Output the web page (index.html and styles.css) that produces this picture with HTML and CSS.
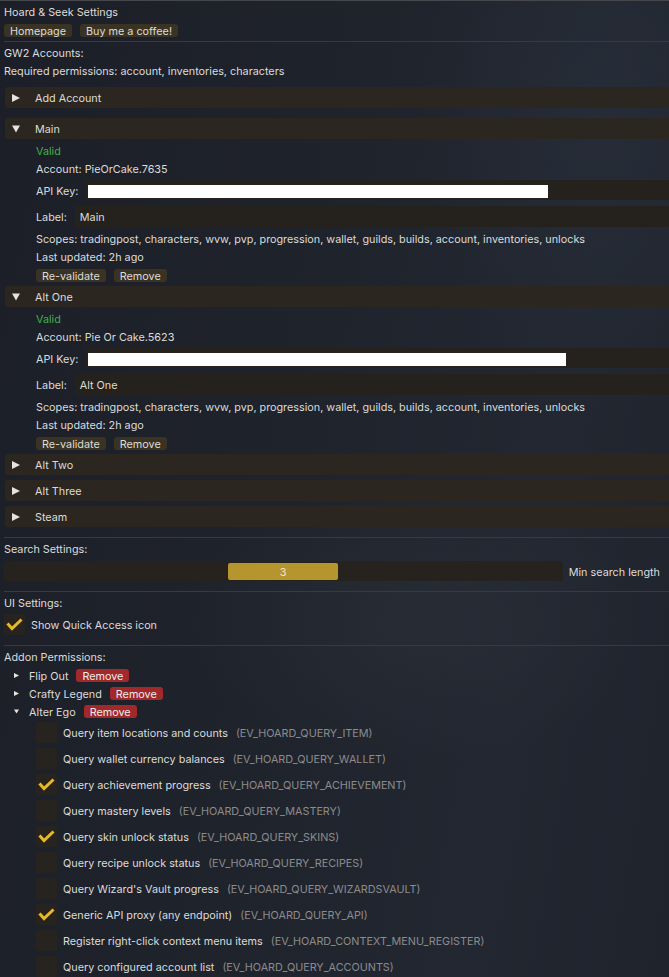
FILE: index.html
```html
<!DOCTYPE html>
<html>
<head>
<meta charset="utf-8">
<title>Hoard &amp; Seek Settings</title>
<link rel="stylesheet" href="styles.css">
</head>
<body>
<div class="win">
  <div class="line">Hoard &amp; Seek Settings</div>
  <div class="btnrow"><span class="btn">Homepage</span><span class="btn">Buy me a coffee!</span></div>
  <div class="sep sep-top"></div>
  <div class="line">GW2 Accounts:</div>
  <div class="line">Required permissions: account, inventories, characters</div>

  <div class="hdr hdr-add"><svg class="tri" viewBox="0 0 8 8"><polygon points="0,0 8,4 0,8"/></svg><span>Add Account</span></div>

  <div class="hdr hdr-main"><svg class="tri" viewBox="0 0 8 8"><polygon points="0,0.5 8,0.5 4,7.5"/></svg><span>Main</span></div>
  <div class="acct">
    <div class="line valid">Valid</div>
    <div class="line">Account: PieOrCake.7635</div>
    <div class="field field-key"><span>API Key:</span><span class="input"><span class="redact" style="width:460px"></span></span></div>
    <div class="field field-label"><span>Label:</span><span class="input">Main</span></div>
    <div class="line scopes">Scopes: tradingpost, characters, wvw, pvp, progression, wallet, guilds, builds, account, inventories, unlocks</div>
    <div class="line">Last updated: 2h ago</div>
    <div class="btnrow"><span class="btn">Re-validate</span><span class="btn">Remove</span></div>
  </div>

  <div class="hdr hdr-alt1"><svg class="tri" viewBox="0 0 8 8"><polygon points="0,0.5 8,0.5 4,7.5"/></svg><span>Alt One</span></div>
  <div class="acct">
    <div class="line valid">Valid</div>
    <div class="line">Account: Pie Or Cake.5623</div>
    <div class="field field-key"><span>API Key:</span><span class="input"><span class="redact" style="width:478px"></span></span></div>
    <div class="field field-label"><span>Label:</span><span class="input">Alt One</span></div>
    <div class="line scopes">Scopes: tradingpost, characters, wvw, pvp, progression, wallet, guilds, builds, account, inventories, unlocks</div>
    <div class="line">Last updated: 2h ago</div>
    <div class="btnrow"><span class="btn">Re-validate</span><span class="btn">Remove</span></div>
  </div>

  <div class="hdr hdr-alt2"><svg class="tri" viewBox="0 0 8 8"><polygon points="0,0 8,4 0,8"/></svg><span>Alt Two</span></div>
  <div class="hdr hdr-next"><svg class="tri" viewBox="0 0 8 8"><polygon points="0,0 8,4 0,8"/></svg><span>Alt Three</span></div>
  <div class="hdr hdr-next"><svg class="tri" viewBox="0 0 8 8"><polygon points="0,0 8,4 0,8"/></svg><span>Steam</span></div>

  <div class="sep"></div>
  <div class="line">Search Settings:</div>
  <div class="slider-row">
    <div class="slider"><span class="grab" style="margin-left:224px">3</span></div>
    <span class="slider-label">Min search length</span>
  </div>

  <div class="sep"></div>
  <div class="line">UI Settings:</div>
  <div class="check-row ui-check">
    <span class="box"><svg viewBox="0 0 21 21"><polyline points="3.5,9.5 8,14.5 17.5,5.5"/></svg></span>
    <span>Show Quick Access icon</span>
  </div>

  <div class="sep"></div>
  <div class="line">Addon Permissions:</div>
  <div class="addon"><svg class="stri" viewBox="0 0 5 5"><polygon points="0,0 5,2.5 0,5"/></svg><span>Flip Out</span><span class="btn red">Remove</span></div>
  <div class="addon"><svg class="stri" viewBox="0 0 5 5"><polygon points="0,0 5,2.5 0,5"/></svg><span>Crafty Legend</span><span class="btn red">Remove</span></div>
  <div class="addon"><svg class="stri" viewBox="0 0 5 5"><polygon points="0,0.5 5,0.5 2.5,4.5"/></svg><span>Alter Ego</span><span class="btn red">Remove</span></div>

  <div class="perms">
    <div class="check-row perm"><span class="box"></span><span>Query item locations and counts</span><span class="code">(EV_HOARD_QUERY_ITEM)</span></div>
    <div class="check-row perm"><span class="box"></span><span>Query wallet currency balances</span><span class="code">(EV_HOARD_QUERY_WALLET)</span></div>
    <div class="check-row perm"><span class="box"><svg viewBox="0 0 21 21"><polyline points="3.5,9.5 8,14.5 17.5,5.5"/></svg></span><span>Query achievement progress</span><span class="code">(EV_HOARD_QUERY_ACHIEVEMENT)</span></div>
    <div class="check-row perm"><span class="box"></span><span>Query mastery levels</span><span class="code">(EV_HOARD_QUERY_MASTERY)</span></div>
    <div class="check-row perm"><span class="box"><svg viewBox="0 0 21 21"><polyline points="3.5,9.5 8,14.5 17.5,5.5"/></svg></span><span>Query skin unlock status</span><span class="code">(EV_HOARD_QUERY_SKINS)</span></div>
    <div class="check-row perm"><span class="box"></span><span>Query recipe unlock status</span><span class="code">(EV_HOARD_QUERY_RECIPES)</span></div>
    <div class="check-row perm"><span class="box"></span><span>Query Wizard's Vault progress</span><span class="code">(EV_HOARD_QUERY_WIZARDSVAULT)</span></div>
    <div class="check-row perm"><span class="box"><svg viewBox="0 0 21 21"><polyline points="3.5,9.5 8,14.5 17.5,5.5"/></svg></span><span>Generic API proxy (any endpoint)</span><span class="code">(EV_HOARD_QUERY_API)</span></div>
    <div class="check-row perm"><span class="box"></span><span>Register right-click context menu items</span><span class="code">(EV_HOARD_CONTEXT_MENU_REGISTER)</span></div>
    <div class="check-row perm"><span class="box"></span><span>Query configured account list</span><span class="code">(EV_HOARD_QUERY_ACCOUNTS)</span></div>
  </div>
</div>
</body>
</html>
```
FILE: styles.css
```css
html, body {
  margin: 0;
  padding: 0;
}
body {
  width: 669px;
  height: 977px;
  overflow: hidden;
  font-family: Inter, "Noto Sans", sans-serif;
  font-size: 10.8px;
  color: #dcdcda;
  background:
    radial-gradient(ellipse 260px 420px at 600px 120px, rgba(44, 52, 64, 0.45), rgba(44, 52, 64, 0) 70%),
    radial-gradient(ellipse 340px 200px at 420px 620px, rgba(46, 52, 60, 0.45), rgba(46, 52, 60, 0) 70%),
    linear-gradient(100deg, #1c1f28 0%, #1f232c 45%, #222731 75%, #1f232c 100%);
}
.win {
  border-top: 1px solid #45474c;
  padding: 2px 0 0 4px;
}
/* text lines: 18px rows, glyphs sit 1px lower than centre like ImGui */
.line {
  height: 18px;
  line-height: 20px;
  white-space: nowrap;
}
.valid {
  color: #3fb04a;
}
.btnrow {
  height: 18px;
  display: flex;
  align-items: center;
  gap: 8px;
}
.btn {
  height: 13px;
  line-height: 15px;
  padding: 0 6px;
  background: #3a3323;
  border-radius: 3px;
  white-space: nowrap;
}
.btn.red {
  background: #a1282b;
  color: #ececec;
}
.sep {
  height: 1px;
  background: #3a3a37;
  margin: 10px 0 2px 0;
}
.sep-top {
  margin-top: 2px;
}

/* collapsing headers */
.hdr {
  height: 21px;
  margin: 5px 0 0 1px;
  padding-left: 7px;
  background: #2b2720;
  border-radius: 3px 0 0 3px;
  display: flex;
  align-items: center;
  gap: 15px;
  white-space: nowrap;
}
.hdr span {
  padding-top: 2px;
}
.hdr-add { margin-top: 7px; }
.hdr-main { margin-top: 10px; }
.hdr-alt1 { margin-top: 2px; }
.hdr-alt2 { margin-top: 2px; }
.tri {
  width: 8px;
  height: 8px;
  fill: #e6e3dc;
  flex: none;
}

/* account body */
.acct {
  padding-left: 32px;
  margin-top: 3px;
}
.field {
  display: flex;
  align-items: stretch;
  gap: 8px;
  white-space: nowrap;
}
.field > span:first-child {
  display: flex;
  align-items: center;
  padding-top: 2px;
}
.field-key {
  height: 20px;
  margin-top: 2px;
}
.field-label {
  height: 21px;
  margin-top: 6px;
}
.input {
  flex: 1;
  background: #25221d;
  display: flex;
  align-items: center;
  padding: 2px 0 0 5px;
}
.field-key .input {
  padding-left: 2px;
}
.redact {
  height: 13px;
  background: #ffffff;
}
.scopes {
  margin-top: 3px;
}

/* slider */
.slider-row {
  display: flex;
  align-items: center;
  gap: 6px;
  height: 20px;
  margin-top: 3px;
}
.slider {
  flex: 1;
  height: 20px;
  background: #26231e;
  border-radius: 2px;
  display: flex;
  align-items: center;
}
.grab {
  width: 110px;
  height: 17px;
  line-height: 19px;
  background: #b7952e;
  border-radius: 2px;
  text-align: center;
  color: #ece4cc;
}
.slider-label {
  margin-right: 9px;
  padding-top: 2px;
  white-space: nowrap;
}

/* checkboxes */
.check-row {
  display: flex;
  align-items: center;
  gap: 6px;
  height: 21px;
  white-space: nowrap;
}
.check-row > span:not(.box) {
  padding-top: 2px;
}
.ui-check {
  margin-top: 2px;
}
.box {
  width: 21px;
  height: 21px;
  background: #27241f;
  border-radius: 2px;
  flex: none;
}
.box svg {
  width: 21px;
  height: 21px;
  display: block;
  fill: none;
  stroke: #e9b727;
  stroke-width: 3;
}

/* addon permissions */
.addon {
  height: 18px;
  display: flex;
  align-items: center;
  padding-left: 10px;
  white-space: nowrap;
}
.addon > span:not(.btn) {
  padding-top: 2px;
}
.stri {
  width: 5px;
  height: 5px;
  fill: #e6e3dc;
  margin-right: 10px;
  flex: none;
}
.addon .btn {
  margin-left: 8px;
}
.perms {
  margin-top: 2px;
  padding-left: 32px;
  display: flex;
  flex-direction: column;
  gap: 5px;
}
.code {
  color: #8c8c8c;
  margin-left: 2px;
}
```
